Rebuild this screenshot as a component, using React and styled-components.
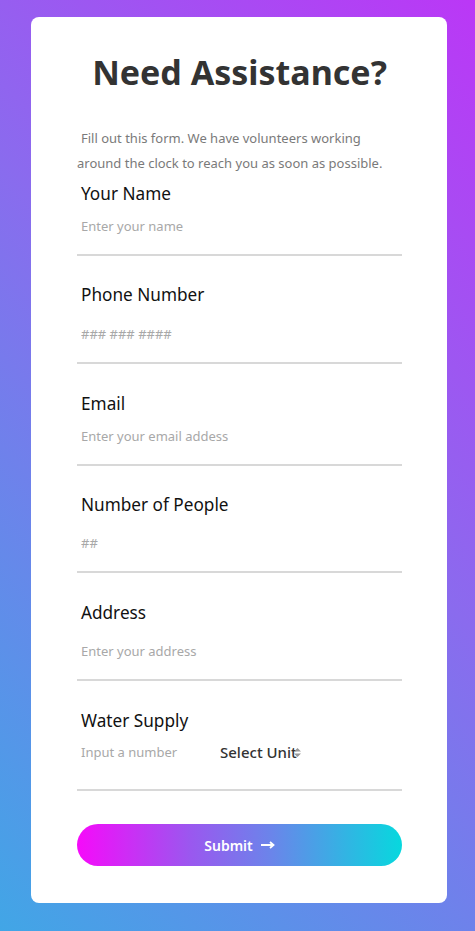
import React from "react"
import styled, { createGlobalStyle } from "styled-components"

const GlobalStyle = createGlobalStyle`
  html, body {
    margin: 0;
    padding: 0;
  }
  body {
    font-family: "Noto Sans", "Open Sans", sans-serif;
    background: linear-gradient(225deg, #bb37f6 0%, #8a6bee 45%, #41a6e6 100%);
    min-height: 931px;
  }
`

const Page = styled.div`
  display: flex;
  justify-content: center;
  padding: 17px 28px 28px 31px;
`

const Card = styled.div`
  width: 416px;
  height: 886px;
  box-sizing: border-box;
  background: #ffffff;
  border-radius: 8px;
  padding: 33px 45px 0 46px;
`

const Title = styled.h1`
  margin: 0;
  text-align: center;
  font-size: 34px;
  line-height: 44px;
  font-weight: 700;
  color: #333333;
`

const Intro = styled.p`
  margin: 32px 0 0;
  font-size: 13px;
  line-height: 25px;
  color: #7a7a7a;
  text-indent: 4px;
`

const Field = styled.div`
  display: flex;
  flex-direction: column;
  border-bottom: 2px solid #d8d8d8;
  margin-top: ${(p) => p.$top}px;
`

const Label = styled.label`
  padding-left: 4px;
  font-size: 17.2px;
  line-height: 22px;
  color: #111111;
`

const Input = styled.input`
  border: none;
  outline: none;
  background: transparent;
  padding: 0 4px;
  margin-top: ${(p) => p.$gap || 0}px;
  margin-bottom: 18px;
  height: 20px;
  font-family: inherit;
  font-size: 13px;
  color: #333;
  &::placeholder {
    color: #a8a8a8;
  }
`

const Row = styled.div`
  display: flex;
  align-items: center;
  height: 22px;
  margin-top: 9px;
  margin-bottom: 26px;
`

const SmallInput = styled(Input)`
  width: 135px;
  margin: 0;
`

const UnitSelect = styled.div`
  position: relative;
  font-size: 15px;
  font-weight: 500;
  color: #333333;
`

const UnitArrow = styled.svg`
  position: absolute;
  right: -4px;
  top: 6px;
`

const Submit = styled.button`
  margin-top: 33px;
  width: 100%;
  height: 42px;
  border: none;
  border-radius: 21px;
  background: linear-gradient(90deg, #f60afa 0%, #9a58ef 35%, #6a85ea 60%, #07d8de 100%);
  color: #ffffff;
  font-family: inherit;
  font-size: 14px;
  font-weight: 600;
  display: flex;
  align-items: center;
  justify-content: center;
  gap: 8px;
`

const fields = [
  { label: "Your Name", placeholder: "Enter your name", top: 7, gap: 11 },
  { label: "Phone Number", placeholder: "### ### ####", top: 28, gap: 18 },
  { label: "Email", placeholder: "Enter your email addess", top: 29, gap: 11 },
  { label: "Number of People", placeholder: "##", top: 28, gap: 17 },
  { label: "Address", placeholder: "Enter your address", top: 29, gap: 17 },
]

export default function App() {
  return (
    <>
      <GlobalStyle />
      <Page>
        <Card>
          <Title>Need Assistance?</Title>
          <Intro>
            Fill out this form. We have volunteers working around the clock to reach you as soon as possible.
          </Intro>
          {fields.map((f) => (
            <Field key={f.label} $top={f.top}>
              <Label>{f.label}</Label>
              <Input placeholder={f.placeholder} $gap={f.gap} />
            </Field>
          ))}
          <Field $top={29}>
            <Label>Water Supply</Label>
            <Row>
              <SmallInput placeholder="Input a number" />
              <UnitSelect>
                Select Unit
                <UnitArrow width="7" height="9" viewBox="0 0 7 9">
                  <path d="M3.5 0L7 3.5H0z M3.5 9L0 5.5H7z" fill="#999" />
                </UnitArrow>
              </UnitSelect>
            </Row>
          </Field>
          <Submit>
            Submit
            <svg width="14" height="8" viewBox="0 0 14 8">
              <path d="M0 4H12M9 1L12.5 4L9 7" stroke="#fff" strokeWidth="1.8" fill="none" />
            </svg>
          </Submit>
        </Card>
      </Page>
    </>
  )
}
